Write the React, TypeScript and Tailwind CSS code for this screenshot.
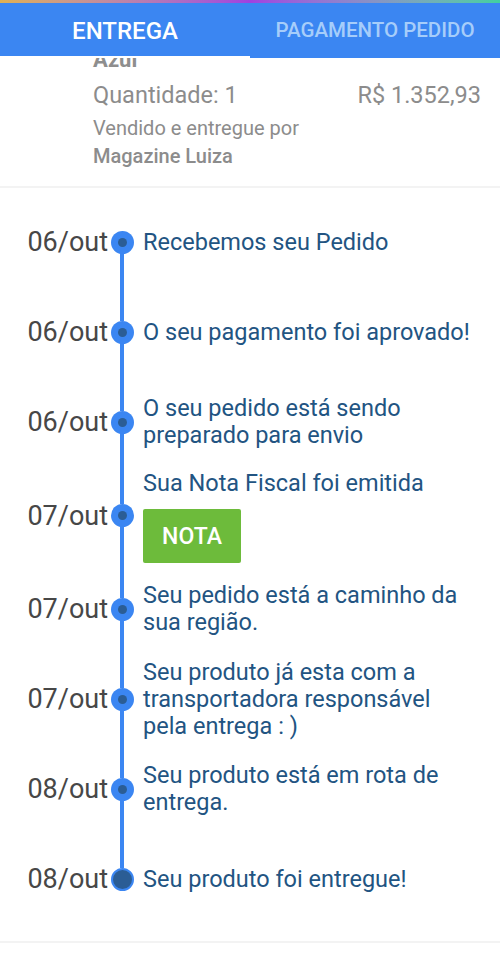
const steps = [
  { date: '06/out', lines: ['Recebemos seu Pedido'] },
  { date: '06/out', lines: ['O seu pagamento foi aprovado!'] },
  { date: '06/out', lines: ['O seu pedido está sendo', 'preparado para envio'] },
  { date: '07/out', lines: ['Sua Nota Fiscal foi emitida'], button: 'NOTA' },
  { date: '07/out', lines: ['Seu pedido está a caminho da', 'sua região.'] },
  { date: '07/out', lines: ['Seu produto já esta com a', 'transportadora responsável', 'pela entrega : )'] },
  { date: '08/out', lines: ['Seu produto está em rota de', 'entrega.'] },
  { date: '08/out', lines: ['Seu produto foi entregue!'] },
]

function Step({ step, first, last }: { step: (typeof steps)[number]; first: boolean; last: boolean }) {
  return (
    <div className="flex min-h-[90px]">
      <div className="flex w-[108px] shrink-0 items-center justify-end text-[27px] leading-[30px] text-[#474747]">
        {step.date}
      </div>
      <div className="flex w-[28px] shrink-0 flex-col items-center">
        <div className={`w-[4px] flex-1 ${first ? 'bg-transparent' : 'bg-[#3b86f2]'}`} />
        {last ? (
          <div className="h-[23px] w-[23px] rounded-full border-2 border-[#3b86f2] bg-[#2b5d95]" />
        ) : (
          <div className="flex h-[23px] w-[23px] items-center justify-center rounded-full bg-[#3b86f2]">
            <div className="h-[9px] w-[9px] rounded-full bg-[#2b5d95]" />
          </div>
        )}
        <div className={`w-[4px] flex-1 ${last ? 'bg-transparent' : 'bg-[#3b86f2]'}`} />
      </div>
      <div className="flex flex-col justify-center py-[1px] pl-[7px] text-[23.5px] leading-[27px] whitespace-nowrap text-[#225482]">
        {step.lines.map((l) => (
          <div key={l} className={step.button ? 'mt-[2px]' : ''}>
            {l}
          </div>
        ))}
        {step.button && (
          <div className="mt-[12px] flex h-[54px] w-[98px] items-center justify-center rounded-[2px] bg-[#6dbb3b] text-[23px] font-medium text-white">
            {step.button}
          </div>
        )}
      </div>
    </div>
  )
}

export default function App() {
  return (
    <div className="h-[954px] w-[500px] overflow-hidden bg-white font-['Roboto',sans-serif]">
      <div className="relative z-10">
        <div className="h-[3px] bg-gradient-to-r from-[#e0b050] via-[#a040e0] to-[#40d0a0]" />
        <div className="flex h-[55px] bg-[#3b86f2]">
          <div className="flex w-1/2 flex-col">
            <div className="flex flex-1 items-center justify-center pt-[2px] text-[24px] font-medium text-white">ENTREGA</div>
            <div className="h-[2px] bg-white" />
          </div>
          <div className="flex w-1/2 items-center justify-center text-[20.5px] font-medium text-[#a6cdfa]">
            PAGAMENTO PEDIDO
          </div>
        </div>
      </div>

      <div className="pl-[93px] pr-[19px] pb-[18px]">
        <div className="-mt-[10px] h-[24px] text-[22px] font-bold leading-[24px] text-[#8e8e8e]">Azul</div>
        <div className="mt-[9px] flex justify-between text-[23.5px] leading-[28px] text-[#8c8c8c]">
          <span>Quantidade: 1</span>
          <span>R$ 1.352,93</span>
        </div>
        <div className="mt-[7px] text-[20px] leading-[24px] text-[#8c8c8c]">Vendido e entregue por</div>
        <div className="mt-[4px] text-[20px] font-medium leading-[24px] text-[#8c8c8c]">Magazine Luiza</div>
      </div>
      <div className="h-[2px] bg-[#f3f3f3]" />

      <div className="pt-[9px] pb-[17px]">
        {steps.map((s, i) => (
          <Step key={i} step={s} first={i === 0} last={i === steps.length - 1} />
        ))}
      </div>
      <div className="h-[2px] bg-[#f3f3f3]" />
    </div>
  )
}
